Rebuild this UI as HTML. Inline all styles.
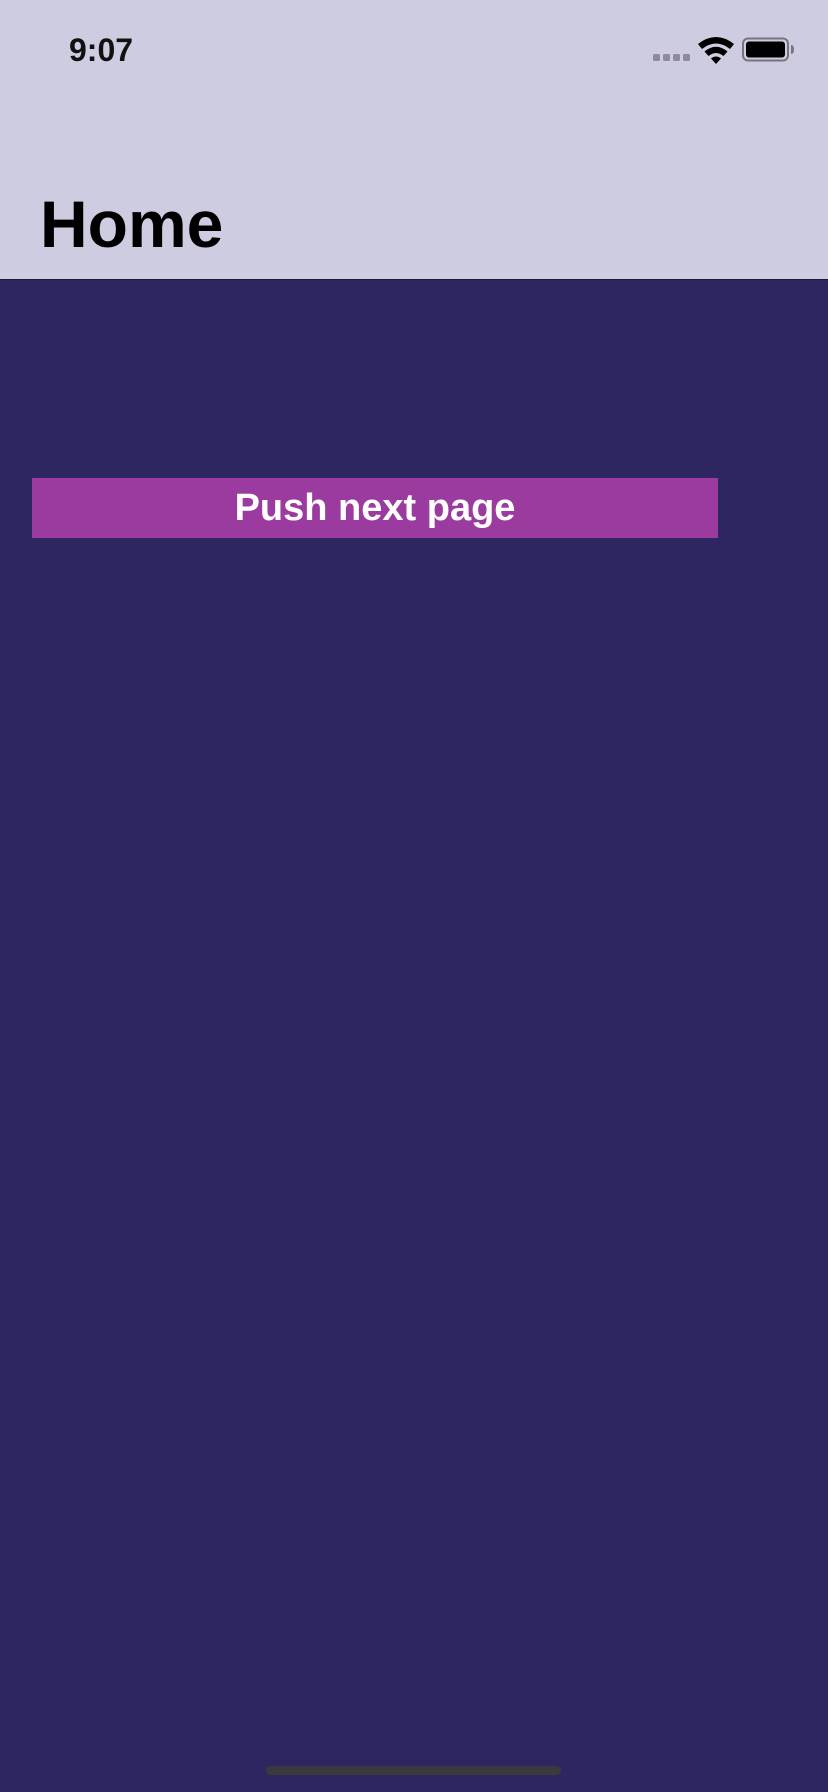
<!DOCTYPE html>
<html><head><meta charset="utf-8"><style>
html,body{margin:0;padding:0;}
body{width:828px;height:1792px;background:#2e2660;position:relative;overflow:hidden;font-family:"Liberation Sans",sans-serif;}
.hdr{position:absolute;left:0;top:0;width:828px;height:279px;background:#cecce1;border-bottom:1px solid #1e1a3a;}
.time{position:absolute;left:69px;top:31px;font-size:32px;font-weight:700;color:#111;line-height:38px;letter-spacing:0}
.title{position:absolute;left:40px;top:186px;font-size:66px;font-weight:700;color:#000;line-height:76px;letter-spacing:0}
.btn{position:absolute;left:32px;top:478px;width:686px;height:60px;background:#9c3b9f;color:#fff;font-size:38px;font-weight:700;text-align:center;line-height:60px;letter-spacing:0}
.home{position:absolute;left:266px;top:1766px;width:295px;height:9px;border-radius:5px;background:#3a3a3e}
</style></head><body>
<div class="hdr">
<div class="time">9:07</div>
<svg style="position:absolute;left:650px;top:34px" width="150" height="32" viewBox="0 0 150 32">
<g fill="#8e8a9c"><rect x="3" y="20" width="7" height="7" rx="1.5"/><rect x="13" y="20" width="7" height="7" rx="1.5"/><rect x="23" y="20" width="7" height="7" rx="1.5"/><rect x="33" y="20" width="7" height="7" rx="1.5"/></g>
<path d="M48 10 Q66 -4 84 10 L80 15 Q66 4 52 15 Z" fill="#000"/>
<path d="M54.5 17.5 Q66 8 77.5 17.5 L73.5 22 Q66 16 58.5 22 Z" fill="#000"/>
<path d="M61 24.5 Q66 20.5 71 24.5 L66 30 Z" fill="#000"/>
<rect x="93" y="4.5" width="45" height="22" rx="5" fill="none" stroke="#77737f" stroke-width="2"/>
<rect x="96" y="7.5" width="39" height="16" rx="3" fill="#000"/>
<path d="M141 11 Q144 11 144 15.5 Q144 20 141 20 Z" fill="#77737f"/>
</svg>
<div class="title">Home</div>
</div>
<div class="btn">Push next page</div>
<div class="home"></div>
</body></html>
